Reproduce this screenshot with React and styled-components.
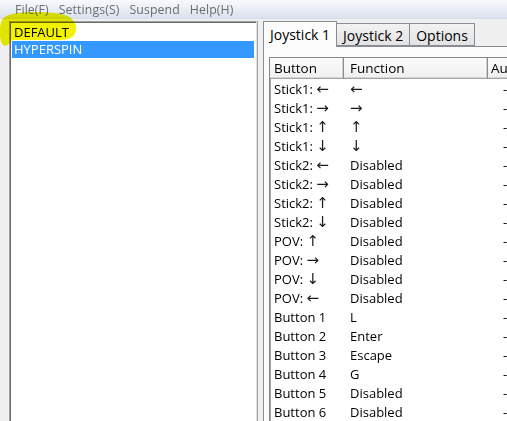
import React from 'react'
import styled, { createGlobalStyle } from 'styled-components'

const GlobalStyle = createGlobalStyle`
  html, body {
    margin: 0;
    padding: 0;
    background: #f0f0f0;
    font-family: "Open Sans", "Noto Sans", sans-serif;
    overflow: hidden;
  }
`

const Window = styled.div`
  position: relative;
  width: 507px;
  height: 421px;
  display: flex;
  flex-direction: column;
  overflow: hidden;
  background: #f0f0f0;
`

const MenuBar = styled.div`
  height: 19px;
  flex: none;
  display: flex;
  align-items: center;
  padding-left: 15px;
  gap: 10px;
  box-sizing: border-box;
  background: linear-gradient(#f8f9fc, #e6ebf4 60%, #dbe2ee);
  border-bottom: 1px solid #d6dde8;
`

const MenuItem = styled.span`
  font-size: 12.3px;
  color: #6d6d6d;
  letter-spacing: 0.1px;
`

const Body = styled.div`
  flex: 1;
  display: flex;
  padding: 2px 0 0 9px;
  min-height: 0;
`

const ListBox = styled.div`
  width: 248px;
  flex: none;
  background: #fff;
  border: 1px solid #a0a0a0;
  border-right-color: #e3e3e3;
  border-bottom: none;
  box-shadow: inset 1px 1px 0 #696969;
  box-sizing: border-box;
  padding: 2px 2px 0 2px;
`

const ListItem = styled.div`
  height: 17px;
  line-height: 17px;
  font-size: 13px;
  padding-left: 2px;
  color: ${p => (p.selected ? '#fff' : '#000')};
  background: ${p => (p.selected ? '#3399ff' : 'transparent')};
`

const Splitter = styled.div`
  width: 6px;
  flex: none;
  border-left: 1px solid #a0a0a0;
  box-sizing: border-box;
`

const RightPane = styled.div`
  flex: 1;
  display: flex;
  flex-direction: column;
  min-width: 0;
`

const TabStrip = styled.div`
  display: flex;
  align-items: flex-end;
  height: 25px;
  flex: none;
  padding-left: 0;
`

const Tab = styled.div`
  font-size: 14px;
  padding: 0 ${p => (p.active ? 6 : 6)}px;
  height: ${p => (p.active ? 26 : 23)}px;
  line-height: ${p => (p.active ? 25 : 23)}px;
  margin-bottom: ${p => (p.active ? -1 : 0)}px;
  margin-left: ${p => (p.active ? 0 : -1)}px;
  box-sizing: border-box;
  border: 1px solid #898c95;
  border-bottom: ${p => (p.active ? 'none' : '1px solid #898c95')};
  background: ${p => (p.active ? '#fcfcfc' : 'linear-gradient(#f2f2f2, #e3e3e3)')};
  z-index: ${p => (p.active ? 2 : 1)};
  position: relative;
  white-space: nowrap;
`

const TabPanel = styled.div`
  flex: 1;
  background: #fcfcfc;
  border: 1px solid #898c95;
  border-right: none;
  border-bottom: none;
  padding: 10px 0 0 5px;
  min-height: 0;
`

const ListView = styled.div`
  height: 100%;
  background: #fff;
  border: 1px solid #828790;
  border-right: none;
  border-bottom: none;
  box-shadow: inset 1px 1px 0 #a0a0a0;
  overflow: hidden;
`

const Grid = styled.div`
  display: grid;
  grid-template-columns: 74px 144px 60px;
`

const HeaderCell = styled.div`
  height: 21px;
  line-height: 20px;
  font-size: 13.5px;
  padding-left: ${p => p.pad || 4}px;
  box-sizing: border-box;
  background: linear-gradient(#fbfbfb, #f0f0f0);
  border-right: 1px solid #8a8a8a;
  border-bottom: 1px solid #a5a5a5;
  box-shadow: inset -1px 0 0 #d5d5d5, inset 0 -1px 0 #d5d5d5;
  white-space: nowrap;
  overflow: hidden;
`

const Cell = styled.div`
  height: 19px;
  line-height: 20px;
  font-size: 13px;
  padding-left: ${p => p.pad || 4}px;
  white-space: nowrap;
  color: #000;
`

const Arrow = styled.span`
  font-family: "DejaVu Sans", sans-serif;
  font-size: 15px;
  color: #1a1a1a;
`

const Highlight = styled.svg`
  position: absolute;
  left: 0;
  top: 0;
  pointer-events: none;
  mix-blend-mode: multiply;
`

const rows = [
  ['Stick1:', '←', '←'],
  ['Stick1:', '→', '→'],
  ['Stick1:', '↑', '↑'],
  ['Stick1:', '↓', '↓'],
  ['Stick2:', '←', 'Disabled'],
  ['Stick2:', '→', 'Disabled'],
  ['Stick2:', '↑', 'Disabled'],
  ['Stick2:', '↓', 'Disabled'],
  ['POV:', '↑', 'Disabled'],
  ['POV:', '→', 'Disabled'],
  ['POV:', '↓', 'Disabled'],
  ['POV:', '←', 'Disabled'],
  ['Button 1', '', 'L'],
  ['Button 2', '', 'Enter'],
  ['Button 3', '', 'Escape'],
  ['Button 4', '', 'G'],
  ['Button 5', '', 'Disabled'],
  ['Button 6', '', 'Disabled']
]

const isArrow = s => '←→↑↓'.includes(s)

const App = () => (
  <Window>
    <GlobalStyle />
    <MenuBar>
      <MenuItem>File(F)</MenuItem>
      <MenuItem>Settings(S)</MenuItem>
      <MenuItem>Suspend</MenuItem>
      <MenuItem>Help(H)</MenuItem>
    </MenuBar>
    <Body>
      <ListBox>
        <ListItem>DEFAULT</ListItem>
        <ListItem selected>HYPERSPIN</ListItem>
      </ListBox>
      <Splitter />
      <RightPane>
        <TabStrip>
          <Tab active>Joystick 1</Tab>
          <Tab>Joystick 2</Tab>
          <Tab>Options</Tab>
        </TabStrip>
        <TabPanel>
          <ListView>
            <Grid>
              <HeaderCell>Button</HeaderCell>
              <HeaderCell pad={6}>Function</HeaderCell>
              <HeaderCell pad={3}>Auto</HeaderCell>
              {rows.map((r, i) => (
                <React.Fragment key={i}>
                  <Cell>
                    {r[0]}
                    {r[1] && <> <Arrow>{r[1]}</Arrow></>}
                  </Cell>
                  <Cell pad={6}>{isArrow(r[2]) ? <Arrow>{r[2]}</Arrow> : r[2]}</Cell>
                  <Cell pad={15}>-</Cell>
                </React.Fragment>
              ))}
            </Grid>
          </ListView>
        </TabPanel>
      </RightPane>
    </Body>
    <Highlight width="80" height="50" viewBox="0 0 80 50">
      <path
        d="M2 20 C6 12 30 11 54 13 C70 14 77 21 76 30 C75 37 69 40 60 40 L12 40 C10 44 6 47 3 45 C-1 40 -1 27 2 20 Z"
        fill="#f2f200"
      />
    </Highlight>
  </Window>
)

export default App
